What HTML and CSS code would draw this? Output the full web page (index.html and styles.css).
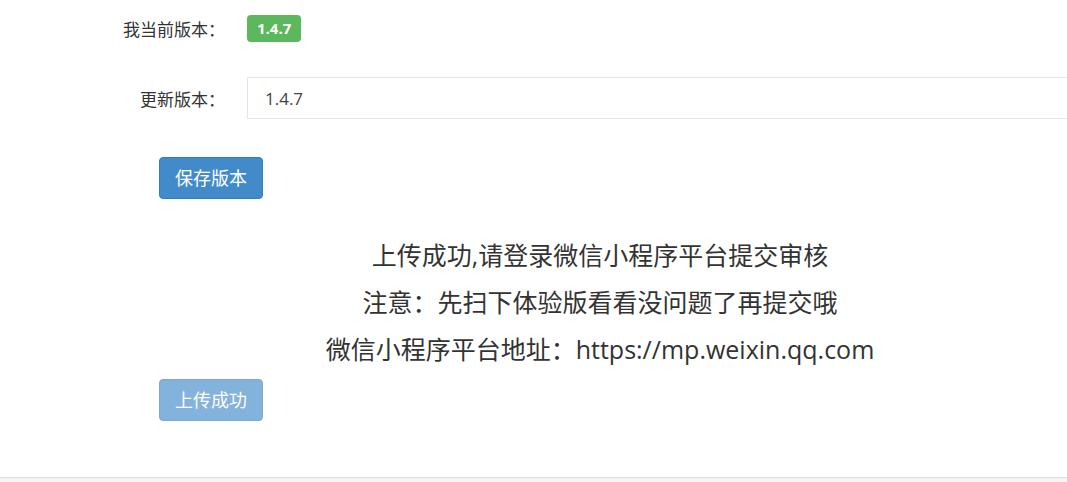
FILE: index.html
```html
<!DOCTYPE html>
<html lang="zh-CN">
<head>
  <meta charset="UTF-8" />
  <title>小程序版本管理</title>
  <link rel="stylesheet" href="styles.css">
</head>
<body>

  <div class="page">
    <div class="form-group">
      <label class="form-label">我当前版本：</label>
      <div class="form-field">
        <span class="badge">1.4.7</span>
      </div>
    </div>

    <div class="form-group input-row">
      <label class="form-label">更新版本：</label>
      <div class="form-field">
        <input class="form-control" type="text" value="1.4.7" />
      </div>
    </div>

    <div class="btn-row">
      <button class="btn">保存版本</button>
    </div>

    <!-- 上传结果 -->
    <div class="msg">
      <p>上传成功,请登录微信小程序平台提交审核</p>
      <p>注意：先扫下体验版看看没问题了再提交哦</p>
      <p>微信小程序平台地址：https://mp.weixin.qq.com</p>
    </div>

    <div class="btn-row upload-row">
      <button class="btn" disabled>上传成功</button>
    </div>
  </div>

  <div class="footer"></div>

</body>
</html>
```

FILE: styles.css
```css
html, body {
  overflow: hidden;
}

body {
  margin: 0;
  background: #fff;
  font-family: "Open Sans", "Noto Sans CJK SC", sans-serif;
  color: #333;
}

.page {
  padding-top: 7px;
  height: 470px;
}

.form-group {
  display: flex;
  align-items: center;
  height: 42px;
}

.input-row {
  margin-top: 28px;
}

.form-label {
  width: 225px;
  text-align: right;
  font-size: 17px;
  padding-right: 22px;
  box-sizing: content-box;
}

.form-field {
  flex: 1;
  margin-right: -20px;
}

.badge {
  display: inline-block;
  background: #5cb85c;
  color: #fff;
  font-weight: bold;
  font-size: 15px;
  line-height: 17px;
  padding: 5px 10px;
  border-radius: 4px;
}

.form-control {
  display: block;
  width: 100%;
  height: 42px;
  box-sizing: border-box;
  padding: 0 17px;
  font-family: inherit;
  font-size: 17px;
  color: #444;
  border: 1px solid #e5e5e5;
  outline: none;
}

.btn-row {
  padding-left: 159px;
  margin-top: 38px;
}

.btn {
  font-family: inherit;
  font-size: 18px;
  line-height: 28px;
  padding: 6px 15px;
  color: #fff;
  background: #428bca;
  border: 1px solid #357ebd;
  border-radius: 4px;
  cursor: pointer;
}

.btn:disabled {
  opacity: 0.65;
  cursor: not-allowed;
}

.msg {
  margin: 33px 0 0 133px;
  text-align: center;
  font-size: 25px;
}

.msg p {
  margin: 0;
  line-height: 47px;
}

.upload-row {
  margin-top: 6px;
}

.footer {
  border-top: 1px solid #ddd;
  background: #f5f5f5;
  height: 20px;
}
```
